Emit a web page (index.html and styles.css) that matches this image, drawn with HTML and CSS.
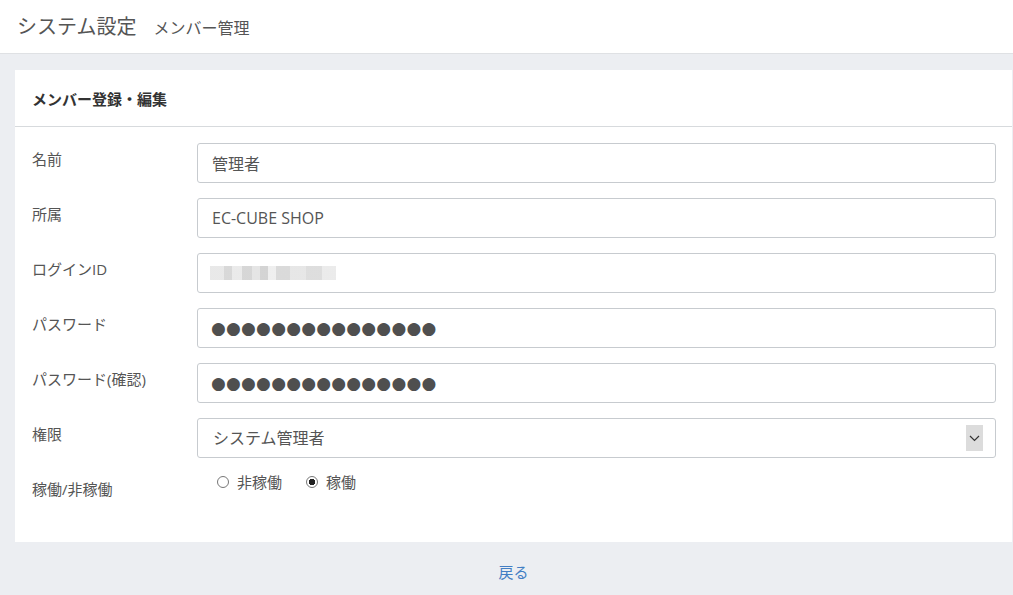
FILE: index.html
```html
<!DOCTYPE html>
<html lang="ja">
<head>
    <meta charset="UTF-8">
    <meta name="viewport" content="width=device-width, initial-scale=1.0">
    <title>メンバー管理</title>
    <link rel="stylesheet" href="styles.css">
</head>
<body>
    <header class="page-header">
        <h1>システム設定<small>メンバー管理</small></h1>
    </header>

    <main class="content">
        <section class="card">
            <div class="card-header">メンバー登録・編集</div>
            <form class="card-body">
                <label class="row-label" for="name">名前</label>
                <input class="field" id="name" type="text" value="管理者" readonly>

                <label class="row-label" for="dept">所属</label>
                <input class="field" id="dept" type="text" value="EC-CUBE SHOP" readonly>

                <label class="row-label">ログインID</label>
                <div class="field masked">
                    <span class="mosaic"></span>
                </div>

                <label class="row-label" for="pw">パスワード</label>
                <div class="field dots" id="pw">●●●●●●●●●●●●●●●</div>

                <label class="row-label" for="pw2">パスワード(確認)</label>
                <div class="field dots" id="pw2">●●●●●●●●●●●●●●●</div>

                <label class="row-label" for="role">権限</label>
                <div class="select-wrap">
                    <select class="field select" id="role">
                        <option>システム管理者</option>
                    </select>
                    <span class="select-arrow">
                        <svg width="11" height="7" viewBox="0 0 11 7"><path d="M1 1l4.5 4.5L10 1" fill="none" stroke="#333" stroke-width="1.2"/></svg>
                    </span>
                </div>

                <label class="row-label">稼働/非稼働</label>
                <div class="radios">
                    <label class="radio"><input type="radio" name="work"> 非稼働</label>
                    <label class="radio"><input type="radio" name="work" checked> 稼働</label>
                </div>
            </form>
        </section>

        <div class="back">
            <a href="#">戻る</a>
        </div>
    </main>
</body>
</html>
```

FILE: styles.css
```css
body {
    margin: 0;
    font-family: "Open Sans", "Noto Sans CJK JP", sans-serif;
    background-color: #eceef2;
    color: #555;
    overflow: hidden;
}

.page-header {
    background-color: #fff;
    height: 54px;
    border-bottom: 1px solid #dfe1e4;
    box-sizing: border-box;
    padding: 0 17px 3px;
    display: flex;
    align-items: center;
}

.page-header h1 {
    margin: 0;
    font-size: 20px;
    font-weight: normal;
    color: #555;
    display: flex;
    align-items: baseline;
    gap: 17px;
}

.page-header small {
    font-size: 16px;
    color: #555;
}

.content {
    padding: 16px 1px 0 15px;
}

.card {
    background-color: #fff;
}

.card-header {
    height: 57px;
    box-sizing: border-box;
    padding: 0 17px;
    display: flex;
    align-items: center;
    font-size: 15px;
    font-weight: bold;
    color: #333;
    border-bottom: 1px solid #d7dadd;
}

.card-body {
    display: grid;
    grid-template-columns: 166px 1fr;
    row-gap: 15px;
    padding: 16px 16px 43px 16px;
    margin: 0;
}

.row-label {
    font-size: 15px;
    padding: 5px 0 0 1px;
    color: #555;
}

.field {
    box-sizing: border-box;
    height: 40px;
    width: 100%;
    border: 1px solid #c7cbcf;
    border-radius: 3px;
    padding: 0 14px;
    font-family: inherit;
    font-size: 16px;
    color: #555;
    background-color: #fff;
    outline: none;
    display: flex;
    align-items: center;
}

.mosaic {
    display: block;
    width: 126px;
    height: 14px;
    margin-left: -2px;
    background:
        linear-gradient(90deg, #e6e6e6 0 14px, #d4d4d4 14px 22px, #e8e8e8 22px 32px, #d2d2d2 32px 42px, #e2e2e2 42px 50px, #cfcfcf 50px 58px, #ededed 58px 66px, #d6d6d6 66px 80px, #e4e4e4 80px 96px, #dadada 96px 112px, #e9e9e9 112px 126px);
    opacity: 0.9;
}

.dots {
    font-size: 17px;
    letter-spacing: 0.2px;
    color: #4f4f4f;
    font-family: "DejaVu Sans", sans-serif;
    padding-left: 13px;
}

.select-wrap {
    position: relative;
}

.select {
    appearance: none;
    -webkit-appearance: none;
    padding-left: 15px;
}

.select-arrow {
    position: absolute;
    right: 13px;
    top: 7px;
    width: 17px;
    height: 26px;
    background-color: #dcdcdc;
    display: flex;
    align-items: center;
    justify-content: center;
}

.radios {
    display: flex;
    gap: 24px;
    padding: 0 0 0 20px;
    margin-top: -2px;
    height: 26px;
    align-items: flex-start;
}

.radio {
    display: flex;
    align-items: center;
    gap: 8px;
    font-size: 15px;
    color: #555;
}

.radio input {
    appearance: none;
    -webkit-appearance: none;
    margin: 0;
    width: 12px;
    height: 12px;
    border: 1px solid #777;
    border-radius: 50%;
    box-sizing: border-box;
    background-color: #fff;
}

.radio input:checked {
    background: radial-gradient(circle, #222 0 3px, #fff 3.5px);
}

.back {
    text-align: center;
    padding-top: 19px;
}

.back a {
    color: #437ec4;
    text-decoration: none;
    font-size: 15px;
}
```
